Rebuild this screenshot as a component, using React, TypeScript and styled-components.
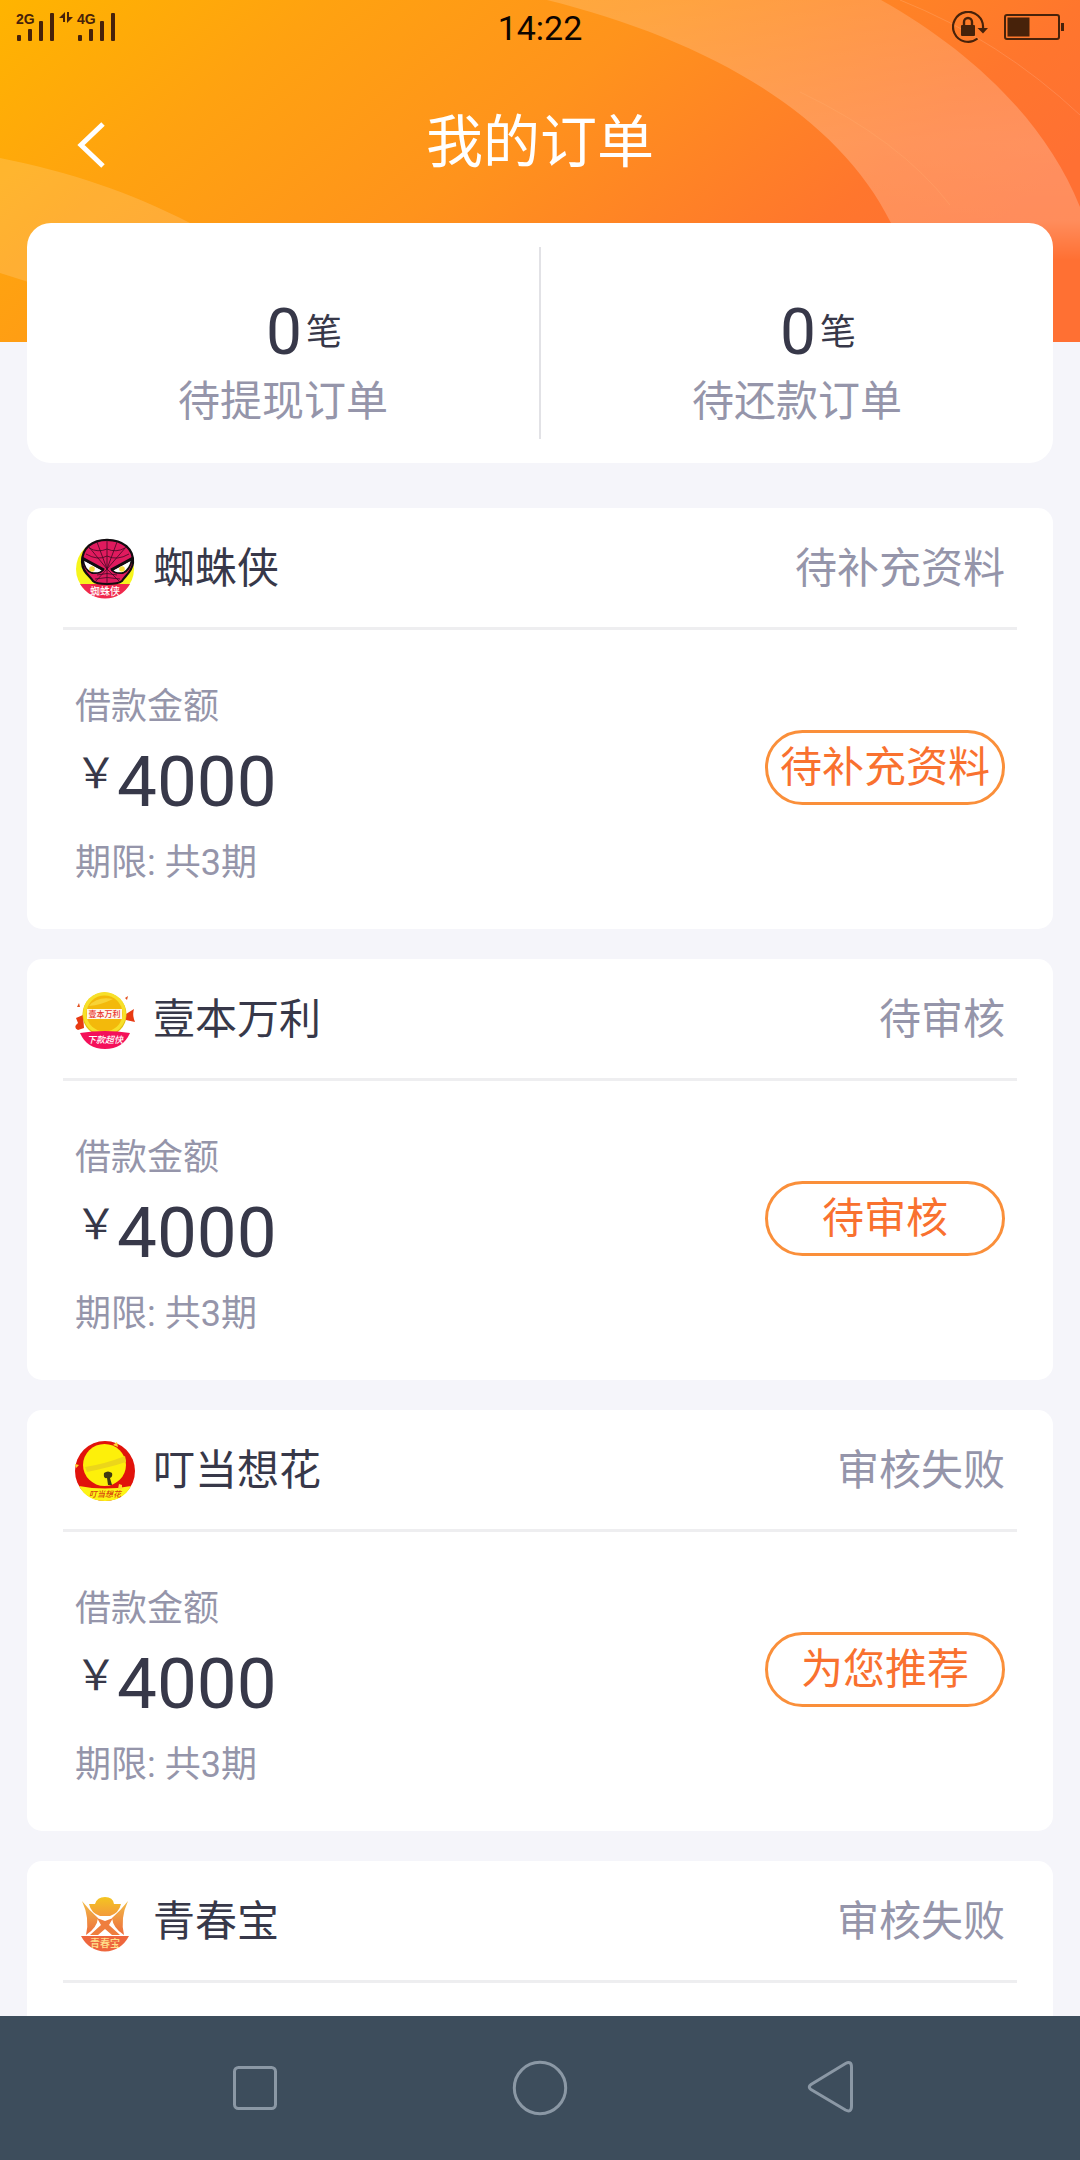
import React from 'react';
import styled, { createGlobalStyle } from 'styled-components';

const INK = '#373849';
const MUTED = '#9595aa';
const ACCENT = '#f9712f';
const STATUS_INK = '#47220a';
const SANS = "Roboto, 'Noto Sans CJK SC', sans-serif";

const GlobalStyle = createGlobalStyle`
  * { box-sizing: border-box; }
  body { margin: 0; background: #f5f5fa; }
  h1, h2, p, ul { margin: 0; padding: 0; font-weight: 400; }
  button { font: inherit; cursor: pointer; }
`;

const Screen = styled.div`
  display: flex;
  flex-direction: column;
  height: 100vh;
  background: #f5f5fa;
  color: ${INK};
  font-family: ${SANS};
  font-size: 42px;
  line-height: 60px;
`;

const Content = styled.main`
  flex: 1;
  min-height: 0;
  overflow-y: auto;
  scrollbar-width: none;
`;

const Header = styled.header`
  position: relative;
  padding-bottom: 119px;
  background: linear-gradient(
    140deg,
    #ffb400 0%,
    #ffa210 22%,
    #ff931c 45%,
    #ff762d 73%,
    #ff7033 85%,
    #ff7033 100%
  );
`;

const Waves = styled.svg`
  position: absolute;
  inset: 0;
  width: 100%;
  height: 100%;
`;

const StatusBar = styled.div`
  position: relative;
  display: grid;
  grid-template-columns: 1fr auto 1fr;
  align-items: center;
  height: 56px;
  padding: 0 16px;
`;

const Clock = styled.time`
  color: #0d0500;
  font-size: 34px;
  line-height: 40px;
`;

const StatusIcons = styled.div`
  display: flex;
  justify-content: flex-end;
  gap: 16px;
`;

const TitleBar = styled.div`
  position: relative;
  display: grid;
  grid-template-columns: 1fr auto 1fr;
  align-items: center;
  height: 167px;
  padding: 6px 60px 0;
`;

const BackButton = styled.button`
  display: flex;
  width: 60px;
  height: 60px;
  padding: 0;
  border: 0;
  background: none;
  color: #fff;
`;

const Title = styled.h1`
  color: #fff;
  font-size: 57px;
  line-height: 80px;
`;

const Summary = styled.section`
  position: relative;
  display: flex;
  margin: -119px 27px 0;
  padding: 24px 0;
  border-radius: 24px;
  background: #fff;
`;

const SummaryItem = styled.div`
  flex: 1;
  display: flex;
  flex-direction: column;
  align-items: center;
  padding: 50px 0 7px;

  & + & {
    border-left: 2px solid #e2e2e6;
  }
`;

const Count = styled.p`
  display: flex;
  align-items: center;
  gap: 4px;
  margin-bottom: 3px;
  padding-left: 42px;
  font-size: 64px;
  line-height: 72px;
`;

const Unit = styled.span`
  font-size: 36px;
`;

const SummaryLabel = styled.p`
  color: ${MUTED};
`;

const OrderList = styled.ul`
  display: flex;
  flex-direction: column;
  gap: 30px;
  padding: 45px 27px 30px;
  list-style: none;
`;

const OrderCard = styled.li`
  padding: 0 36px;
  border-radius: 15px;
  background: #fff;
`;

const OrderHead = styled.div`
  display: flex;
  align-items: center;
  height: 122px;
  padding: 2px 12px 0;
  border-bottom: 3px solid #eeeef0;
`;

const Brand = styled.svg`
  flex: none;
  width: 60px;
  height: 60px;
  margin-right: 18px;
  overflow: visible;
`;

const OrderName = styled.h2`
  font-size: 42px;
`;

const OrderStatus = styled.span`
  margin-left: auto;
  color: ${MUTED};
`;

const OrderBody = styled.div`
  display: flex;
  align-items: center;
  justify-content: space-between;
  padding: 50px 12px 39px;
`;

const Detail = styled.p`
  color: ${MUTED};
  font-size: 36px;
  line-height: 54px;
`;

const Amount = styled.p`
  display: flex;
  align-items: flex-start;
  margin: 4px 0 10px;
  font-size: 71px;
  line-height: 88px;
`;

const Currency = styled.span`
  font-size: 42px;
  line-height: 72px;
`;

const ActionButton = styled.button`
  width: 240px;
  height: 75px;
  margin-bottom: 36px;
  padding: 2px 0 0;
  border: 3px solid #fa8f3a;
  border-radius: 38px;
  background: #fff;
  color: ${ACCENT};
  line-height: 60px;
`;

const NavBar = styled.nav`
  display: flex;
  flex: none;
  justify-content: center;
  height: 144px;
  background: #3d4d5c;
`;

const NavButton = styled.button`
  display: flex;
  flex: 0 1 285px;
  align-items: center;
  justify-content: center;
  padding: 0;
  border: 0;
  background: none;
  color: #8b98a5;
`;

const LogoText = styled.text`
  font-family: 'Noto Sans CJK SC', sans-serif;
  font-weight: 500;
  text-anchor: middle;
`;

const SpiderBrand = () => (
  <Brand viewBox="0 0 60 60" aria-hidden="true">
    <circle cx="30" cy="30" r="29" fill="#f6f51c" />
    <path d="M5 45h50Q47 59 30 59.500Q14 59 5 45z" fill="#f0284e" />
    <path d="M32 .8C48 .8 59 10 58 24C57 33 50 37 47 42C42 46 22 46 18 42C15 37 7 33 7 23C7 9 17 .8 32 .8z" fill="#e01a5e" stroke="#120c10" strokeWidth="2.200" />
    <g fill="none" stroke="#3c0a22" strokeWidth="0.800">
      <path d="M32 1v44M32 30L14 8M32 30L51 8M32 30L22 3M32 30L42 3M32 30L20 43M32 30L45 43" />
      <path d="M14 9Q23 14 32 10Q41 14 50 9M11 15Q23 22 32 17Q42 22 54 15M22 36Q32 33 42 36M20 40Q32 37 45 40" />
    </g>
    <path d="M8 20L28 31Q25 35 17 34Q9 31 8 20z" fill="#fff" stroke="#120c10" strokeWidth="1.800" />
    <path d="M57 20L37 31Q40 35 48 34Q55 31 57 20z" fill="#fff" stroke="#120c10" strokeWidth="1.800" />
    <path d="M7 19L29 31M58 19L36 31" stroke="#120c10" strokeWidth="3" />
    <circle cx="17" cy="30" r="2.800" fill="#f5dc3b" />
    <circle cx="47" cy="30" r="2.800" fill="#f5dc3b" />
    <LogoText x="30" y="56" fontSize="10" fill="#fff">蜘蛛侠</LogoText>
  </Brand>
);

const CoinBrand = () => (
  <Brand viewBox="0 0 60 60" aria-hidden="true">
    <path d="M2 17l2-4 1 4zM50 8l3-2-1 4z" fill="#e2501f" />
    <path d="M1 28l7-3 1 13-6 2q-4-2-2-5l2-2zM51 24l8-5q-2 6 1 13l-9-2z" fill="#e83a12" />
    <circle cx="29.500" cy="24.500" r="22" fill="#e3bd0c" />
    <circle cx="29.500" cy="23.500" r="21.500" fill="#f7e02a" />
    <circle cx="29.500" cy="23.500" r="18" fill="#f3b90b" />
    <path d="M14 16Q22 6 38 9Q26 15 14 16z" fill="#f8d335" />
    <rect x="12" y="19" width="35" height="10" fill="#fff6ea" />
    <LogoText x="29.500" y="27" fontSize="8" fill="#e8352c">壹本万利</LogoText>
    <path d="M5 43Q30 39 55 43Q48 59 30 59Q12 59 5 43z" fill="#f4105a" />
    <LogoText x="30" y="53" fontSize="9" fontStyle="italic" fill="#fff">下款超快</LogoText>
  </Brand>
);

const BellBrand = () => (
  <Brand viewBox="0 0 60 60" aria-hidden="true">
    <circle cx="30" cy="30" r="30" fill="#e1130b" />
    <path d="M4 45Q30 50 56 45Q48 60 30 60Q12 60 4 45z" fill="#fdf416" />
    <ellipse cx="29.500" cy="24" rx="21.500" ry="21" fill="#fdf00a" />
    <path d="M10 26Q30 23 50 15Q51 19 51 21Q36 26 12 31z" fill="#ecd61a" />
    <path d="M38 4l4-3 1 5zM44 43l3 1v4h-4zM0 23l4 1-3 3z" fill="#ffd72e" />
    <path d="M29 32Q33 29 37 32Q38 36 35 37L37 44H33L32 37Q28 38 29 32z" fill="#3f3a12" />
    <LogoText x="30" y="56" fontSize="8" fontStyle="italic" fill="#d8430f">叮当想花</LogoText>
  </Brand>
);

const IngotBrand = () => (
  <Brand viewBox="0 0 60 60" aria-hidden="true">
    <defs>
      <linearGradient id="ingot" x1="0" y1="0" x2="0" y2="1">
        <stop offset="0" stopColor="#f4c520" />
        <stop offset="1" stopColor="#f39a3c" />
      </linearGradient>
      <linearGradient id="pillar" x1="0" y1="0" x2="0" y2="1">
        <stop offset="0" stopColor="#f1bd48" />
        <stop offset="1" stopColor="#ee6c3c" />
      </linearGradient>
    </defs>
    <path d="M20 12Q22 5 30 5Q38 5 39 12L46 12Q44 21 35 24H25Q16 21 14 12z" fill="url(#ingot)" />
    <path d="M7 9Q14 18 23 26Q22 36 11 43Q15 26 7 9zM53 9Q46 18 37 26Q38 36 49 43Q45 26 53 9z" fill="url(#pillar)" />
    <path d="M22 26L30 29L38 26L34 33L45 43H37L30 37L23 43H15L26 33z" fill="#ef7e3e" />
    <path d="M6 44H54Q46 59 30 59.500Q14 59 6 44z" fill="#ee663d" />
    <LogoText x="30" y="55" fontSize="10" fill="#ffe08a">青春宝</LogoText>
  </Brand>
);

const Signals = () => (
  <svg width="104" height="32" viewBox="0 0 104 32" fill={STATUS_INK} role="img" aria-label="2G 4G">
    {[{ x: 0, label: '2G' }, { x: 61, label: '4G' }].map(({ x, label }) => (
      <g key={label} transform={`translate(${x} 0)`}>
        <text x="0" y="12" fontSize="14" fontWeight="700" fontFamily="'Liberation Sans', sans-serif">{label}</text>
        <rect x="1" y="23" width="4" height="6" rx="1" />
        <rect x="12" y="17" width="4" height="12" rx="1" />
        <rect x="23" y="9" width="4" height="20" rx="1" />
        <rect x="34" y="1" width="4" height="28" rx="1" />
      </g>
    ))}
    <path d="M43 6L49 0V10H47V6zM57 5L51 11V0H53V5z" />
  </svg>
);

const RotationLock = () => (
  <svg width="36" height="34" viewBox="0 0 36 34" fill="none" aria-hidden="true">
    <path d="M25.500 27.500A15 15 0 1 1 31 17" stroke={STATUS_INK} strokeWidth="2.200" />
    <path d="M25.500 17H36L31 22.500z" fill={STATUS_INK} />
    <rect x="9" y="14" width="14" height="11" rx="1" fill={STATUS_INK} />
    <path d="M12 15v-4a4 4 0 0 1 8 0v4" stroke={STATUS_INK} strokeWidth="2.400" />
  </svg>
);

const Battery = () => (
  <svg width="60" height="34" viewBox="0 0 60 34" fill="none" aria-hidden="true">
    <rect x="1" y="4" width="54" height="24" rx="2" stroke={STATUS_INK} strokeWidth="2" />
    <rect x="3.500" y="6.500" width="22" height="19" fill={STATUS_INK} />
    <rect x="57" y="12" width="3" height="8" fill={STATUS_INK} />
  </svg>
);

const orders = [
  { name: '蜘蛛侠', status: '待补充资料', action: '待补充资料', Logo: SpiderBrand },
  { name: '壹本万利', status: '待审核', action: '待审核', Logo: CoinBrand },
  { name: '叮当想花', status: '审核失败', action: '为您推荐', Logo: BellBrand },
  { name: '青春宝', status: '审核失败', action: '为您推荐', Logo: IngotBrand },
];

const totals = [
  { count: 0, label: '待提现订单' },
  { count: 0, label: '待还款订单' },
];

export default function App() {
  return (
    <Screen>
      <GlobalStyle />
      <Content>
        <Header>
          <Waves viewBox="0 0 1080 342" preserveAspectRatio="none" aria-hidden="true">
            <defs>
              <linearGradient id="band" x1="0" y1="0" x2="0" y2="1">
                <stop offset="0" stopColor="#fff" stopOpacity="0.160" />
                <stop offset="0.550" stopColor="#fff" stopOpacity="0.220" />
                <stop offset="0.850" stopColor="#fff" stopOpacity="0.200" />
                <stop offset="1" stopColor="#fff" stopOpacity="0" />
              </linearGradient>
            </defs>
            <path d="M547 0C700 38 835 110 891 223L900 260H1080V207C1045 120 970 50 881 0z" fill="url(#band)" />
            <path d="M0 158C70 172 130 192 190 223L100 310Q50 288 0 273z" fill="#fff" fillOpacity="0.150" />
            <path d="M900 0Q1000 40 1080 115" fill="none" stroke="#fff" strokeOpacity="0.130" />
            <path d="M800 92Q900 140 950 205" fill="none" stroke="#ffb070" strokeOpacity="0.300" />
          </Waves>
          <StatusBar>
            <Signals />
            <Clock>14:22</Clock>
            <StatusIcons>
              <RotationLock />
              <Battery />
            </StatusIcons>
          </StatusBar>
          <TitleBar>
            <BackButton aria-label="返回">
              <svg width="60" height="60" viewBox="0 0 60 60" fill="none" aria-hidden="true">
                <path d="M43 11L21 32L43 53" stroke="currentColor" strokeWidth="5" />
              </svg>
            </BackButton>
            <Title>我的订单</Title>
          </TitleBar>
        </Header>
        <Summary>
          {totals.map(({ count, label }) => (
            <SummaryItem key={label}>
              <Count>
                {count}
                <Unit>笔</Unit>
              </Count>
              <SummaryLabel>{label}</SummaryLabel>
            </SummaryItem>
          ))}
        </Summary>
        <OrderList>
          {orders.map(({ name, status, action, Logo }) => (
            <OrderCard key={name}>
              <OrderHead>
                <Logo />
                <OrderName>{name}</OrderName>
                <OrderStatus>{status}</OrderStatus>
              </OrderHead>
              <OrderBody>
                <div>
                  <Detail>借款金额</Detail>
                  <Amount>
                    <Currency>￥</Currency>
                    4000
                  </Amount>
                  <Detail>期限: 共3期</Detail>
                </div>
                <ActionButton>{action}</ActionButton>
              </OrderBody>
            </OrderCard>
          ))}
        </OrderList>
      </Content>
      <NavBar>
        <NavButton aria-label="最近任务">
          <svg width="60" height="60" viewBox="0 0 60 60" fill="none" aria-hidden="true">
            <rect x="9.500" y="9.500" width="41" height="41" rx="4" stroke="currentColor" strokeWidth="3" />
          </svg>
        </NavButton>
        <NavButton aria-label="主页">
          <svg width="60" height="60" viewBox="0 0 60 60" fill="none" aria-hidden="true">
            <circle cx="30" cy="30" r="25.700" stroke="currentColor" strokeWidth="3" />
          </svg>
        </NavButton>
        <NavButton aria-label="返回上一页">
          <svg width="60" height="60" viewBox="0 0 60 60" fill="none" aria-hidden="true">
            <path d="M50.500 5.500Q56.500 2.500 56.500 9V48Q56.500 55 50.500 52L16 31.500Q12.500 29 16 26.500z" stroke="currentColor" strokeWidth="3" />
          </svg>
        </NavButton>
      </NavBar>
    </Screen>
  );
}
